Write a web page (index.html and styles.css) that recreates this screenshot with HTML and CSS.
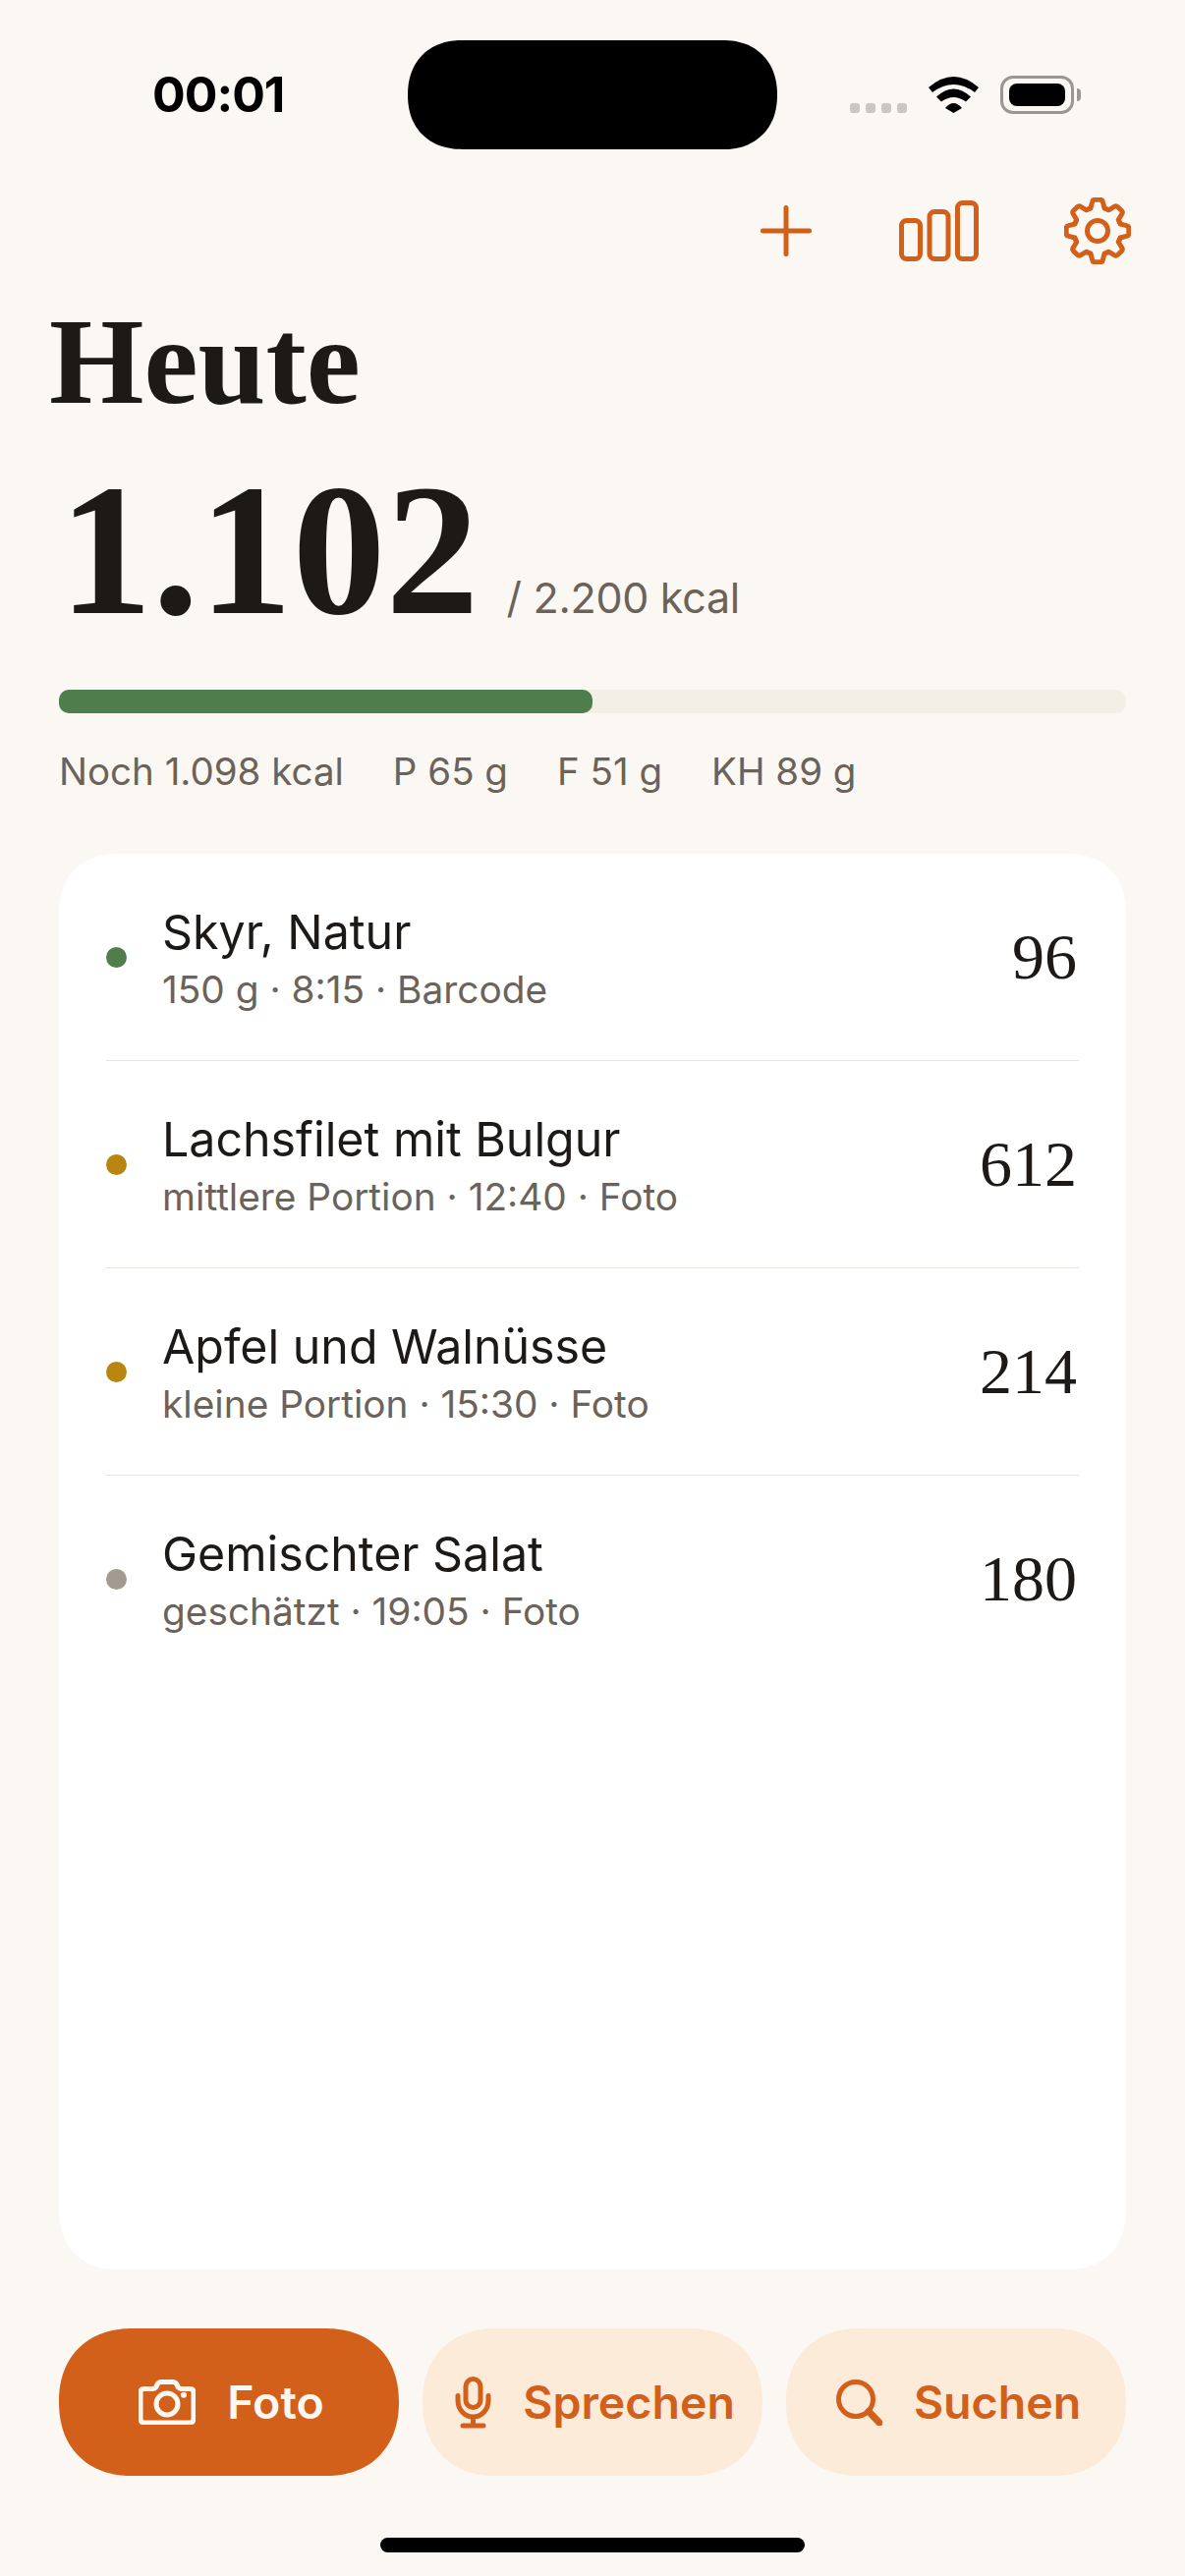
FILE: index.html
```html
<!DOCTYPE html>
<html lang="de">
<head>
  <meta charset="UTF-8" />
  <meta name="viewport" content="width=device-width, initial-scale=1.0"/>
  <title>Heute</title>
  <link rel="stylesheet" href="styles.css">
</head>
<body>
  <div class="screen">
    <div class="status-bar">
      <div class="time">00:01</div>
      <div class="island"></div>
      <div class="status-icons">
        <div class="signal"><span></span><span></span><span></span><span></span></div>
        <svg class="wifi" width="51" height="37" viewBox="0 0 51 37">
          <path d="M0 11Q25.5-11 51 11L47 16Q25.5 0 4 16Z"/>
          <path d="M8 20.6Q25.5 4.4 43 20.6L38 25.6Q25.5 16.4 13 25.6Z"/>
          <path d="M17 32Q25.5 22 34 32L25.5 37Z"/>
        </svg>
        <div class="battery"><div class="battery-level"></div></div>
        <div class="battery-nib"></div>
      </div>
    </div>

    <div class="toolbar">
      <svg class="tool-plus" width="52" height="52" viewBox="0 0 52 52">
        <path d="M26 2.500V49.500M2.500 26H49.500"/>
      </svg>
      <svg class="tool-bars" width="81" height="62" viewBox="0 0 81 62">
        <rect x="2.500" y="20.500" width="19" height="39" rx="5"/>
        <rect x="31" y="11.500" width="19" height="48" rx="5"/>
        <rect x="59.500" y="2.500" width="19" height="57" rx="5"/>
      </svg>
      <svg class="tool-gear" width="68" height="68" viewBox="-34 -34 68 68">
        <defs>
          <path id="tooth" d="M-9.200-22.200A24 24 0 0 1-7-23L-5.400-29.500Q-5-31.800-2.600-31.800H2.600Q5-31.800 5.400-29.500L7-23A24 24 0 0 1 9.200-22.200"/>
        </defs>
        <use href="#tooth"/>
        <use href="#tooth" transform="rotate(45)"/>
        <use href="#tooth" transform="rotate(90)"/>
        <use href="#tooth" transform="rotate(135)"/>
        <use href="#tooth" transform="rotate(180)"/>
        <use href="#tooth" transform="rotate(225)"/>
        <use href="#tooth" transform="rotate(270)"/>
        <use href="#tooth" transform="rotate(315)"/>
        <circle cx="0" cy="0" r="10.500"/>
      </svg>
    </div>

    <h1>Heute</h1>
    <div class="total">
      <span class="total-value">1.102</span>
      <span class="total-goal">/ 2.200 kcal</span>
    </div>

    <div class="progress"><div class="progress-fill"></div></div>

    <div class="stats">
      <span>Noch 1.098 kcal</span>
      <span>P 65 g</span>
      <span>F 51 g</span>
      <span>KH 89 g</span>
    </div>

    <div class="card">
      <div class="row">
        <span class="dot dot-green"></span>
        <div class="row-text">
          <div class="row-title">Skyr, Natur</div>
          <div class="row-sub">150 g · 8:15 · Barcode</div>
        </div>
        <div class="row-kcal">96</div>
      </div>
      <div class="row">
        <span class="dot dot-amber"></span>
        <div class="row-text">
          <div class="row-title">Lachsfilet mit Bulgur</div>
          <div class="row-sub">mittlere Portion · 12:40 · Foto</div>
        </div>
        <div class="row-kcal">612</div>
      </div>
      <div class="row">
        <span class="dot dot-amber"></span>
        <div class="row-text">
          <div class="row-title">Apfel und Walnüsse</div>
          <div class="row-sub">kleine Portion · 15:30 · Foto</div>
        </div>
        <div class="row-kcal">214</div>
      </div>
      <div class="row">
        <span class="dot dot-grey"></span>
        <div class="row-text">
          <div class="row-title">Gemischter Salat</div>
          <div class="row-sub">geschätzt · 19:05 · Foto</div>
        </div>
        <div class="row-kcal">180</div>
      </div>
    </div>

    <div class="actions">
      <button class="action action-main">
        <svg width="58" height="46" viewBox="0 0 58 46">
          <path d="M6 9.500H14Q16.500 9.500 18 7.500L19 5Q20.500 2.500 23 2.500H35Q37.500 2.500 39 5L40 7.500Q41.500 9.500 44 9.500H52Q56 9.500 56 13V40Q56 44 52 44H6Q2 44 2 40V13Q2 9.500 6 9.500Z"/>
          <circle cx="29" cy="25" r="11"/>
          <circle class="icon-fill" cx="46" cy="15.700" r="3"/>
        </svg>
        Foto
      </button>
      <button class="action">
        <svg width="37" height="53" viewBox="0 0 37 53">
          <rect x="11" y="2.500" width="15" height="29" rx="7.500"/>
          <path d="M3 19.500V24C3 34 10 41 18.500 41C27 41 34 34 34 24V19.500M18.500 41V50M8 50H29"/>
        </svg>
        Sprechen
      </button>
      <button class="action">
        <svg width="47" height="47" viewBox="0 0 47 47">
          <circle cx="20" cy="20" r="17.500"/>
          <path class="icon-thick" d="M33 32.500L44 44"/>
        </svg>
        Suchen
      </button>
    </div>

    <div class="home-bar"></div>
  </div>
</body>
</html>
```

FILE: styles.css
```css
* {
  box-sizing: border-box;
}
body {
  margin: 0;
  background: #fbf8f3;
  color: #1c1917;
  font-family: Inter, "Noto Sans", sans-serif;
}
.screen {
  width: 1206px;
  height: 2622px;
  overflow: hidden;
}

/* status bar */
.status-bar {
  display: grid;
  grid-template-columns: 415px 376px 1fr;
  height: 152px;
  padding-top: 41px;
}
.time {
  padding: 25px 0 0 155px;
  font-size: 50px;
  line-height: 60px;
  font-weight: 700;
  letter-spacing: -1px;
  color: #000;
}
.island {
  height: 111px;
  background: #000;
  border-radius: 55.5px;
  corner-shape: superellipse(1.15);
}
.status-icons {
  display: flex;
  align-items: flex-end;
  height: 74px;
  padding-left: 74px;
}
.signal {
  display: flex;
  gap: 6px;
  margin-right: 22px;
}
.signal span {
  width: 10px;
  height: 10px;
  border-radius: 3px;
  background: #c9c7c2;
}
.wifi {
  fill: #000;
  margin-right: 22px;
}
.battery {
  width: 75px;
  height: 39px;
  padding: 5px 6px;
  margin-bottom: -1px;
  border: 3px solid #9a9791;
  border-radius: 13px;
}
.battery-level {
  height: 100%;
  background: #000;
  border-radius: 8px;
}
.battery-nib {
  width: 4px;
  height: 13px;
  margin: 0 0 12px 3px;
  background: #9a9791;
  border-radius: 0 6px 6px 0;
}

/* toolbar */
.toolbar {
  display: flex;
  align-items: center;
  height: 68px;
  margin-top: 49px;
  padding-left: 774px;
}
.toolbar svg {
  flex: none;
  fill: none;
  stroke: #d2601a;
  stroke-width: 5;
  stroke-linecap: round;
  stroke-linejoin: round;
}
.tool-bars {
  margin-left: 89px;
}
.tool-gear {
  margin-left: 87px;
}

h1 {
  margin: 40px 0 0;
  padding-left: 50px;
  font-family: "Liberation Serif", serif;
  font-size: 124px;
  line-height: 120px;
  font-weight: 700;
}

.total {
  display: flex;
  align-items: baseline;
  gap: 28px;
  margin-top: 38px;
  padding-left: 60px;
}
.total-value {
  font-family: "Liberation Serif", serif;
  font-size: 190px;
  line-height: 186px;
  font-weight: 700;
}
.total-goal {
  font-size: 43px;
  letter-spacing: -0.3px;
  color: #6b635a;
}

.progress {
  height: 24px;
  margin: 49px 60px 0;
  background: #f3efe7;
  border-radius: 10px;
}
.progress-fill {
  width: 50%;
  height: 100%;
  background: #4f7d4c;
  border-radius: 10px;
}

.stats {
  display: flex;
  gap: 50px;
  margin-top: 36px;
  padding-left: 60px;
  font-size: 38.5px;
  line-height: 46px;
  color: #6b635a;
}

/* food list */
.card {
  height: 1441px;
  margin: 61px 60px 0;
  padding: 0 48px;
  background: #fff;
  border-radius: 60px;
  corner-shape: superellipse(1.15);
}
.row {
  display: flex;
  align-items: center;
  height: 211px;
  border-bottom: 1px solid #e8e3dc;
}
.row:last-child {
  border-bottom: none;
  height: 210px;
}
.dot {
  width: 21px;
  height: 21px;
  margin-right: 36px;
  border-radius: 50%;
}
.dot-green {
  background: #4f7d4c;
}
.dot-amber {
  background: #b8860f;
}
.dot-grey {
  background: #a39a92;
}
.row-text {
  margin-top: 1px;
}
.row-title {
  font-size: 48.3px;
  line-height: 58px;
}
.row-sub {
  margin-top: 6px;
  font-size: 38.8px;
  line-height: 46px;
  color: #6b635a;
}
.row-kcal {
  margin: 0 2px 0 auto;
  font-family: "Liberation Serif", serif;
  font-size: 66px;
}

/* bottom actions */
.actions {
  display: flex;
  gap: 24px;
  margin-top: 60px;
  padding: 0 60px;
}
.action {
  display: flex;
  flex: 1;
  align-items: center;
  justify-content: center;
  gap: 32px;
  height: 150px;
  padding: 0 0 0 5px;
  border: none;
  border-radius: 75px;
  corner-shape: superellipse(1.15);
  background: #fdebda;
  color: #d2601a;
  font-family: inherit;
  font-size: 46.5px;
  font-weight: 600;
}
.action svg {
  flex: none;
  fill: none;
  stroke: currentColor;
  stroke-width: 5;
  stroke-linecap: round;
  stroke-linejoin: round;
}
.action svg .icon-fill {
  fill: currentColor;
  stroke: none;
}
.action svg .icon-thick {
  stroke-width: 7;
}
.action-main {
  background: #d2601a;
  color: #fbf8f3;
}

.home-bar {
  width: 432px;
  height: 15px;
  margin: 63px auto 0;
  background: #000;
  border-radius: 8px;
}
```
